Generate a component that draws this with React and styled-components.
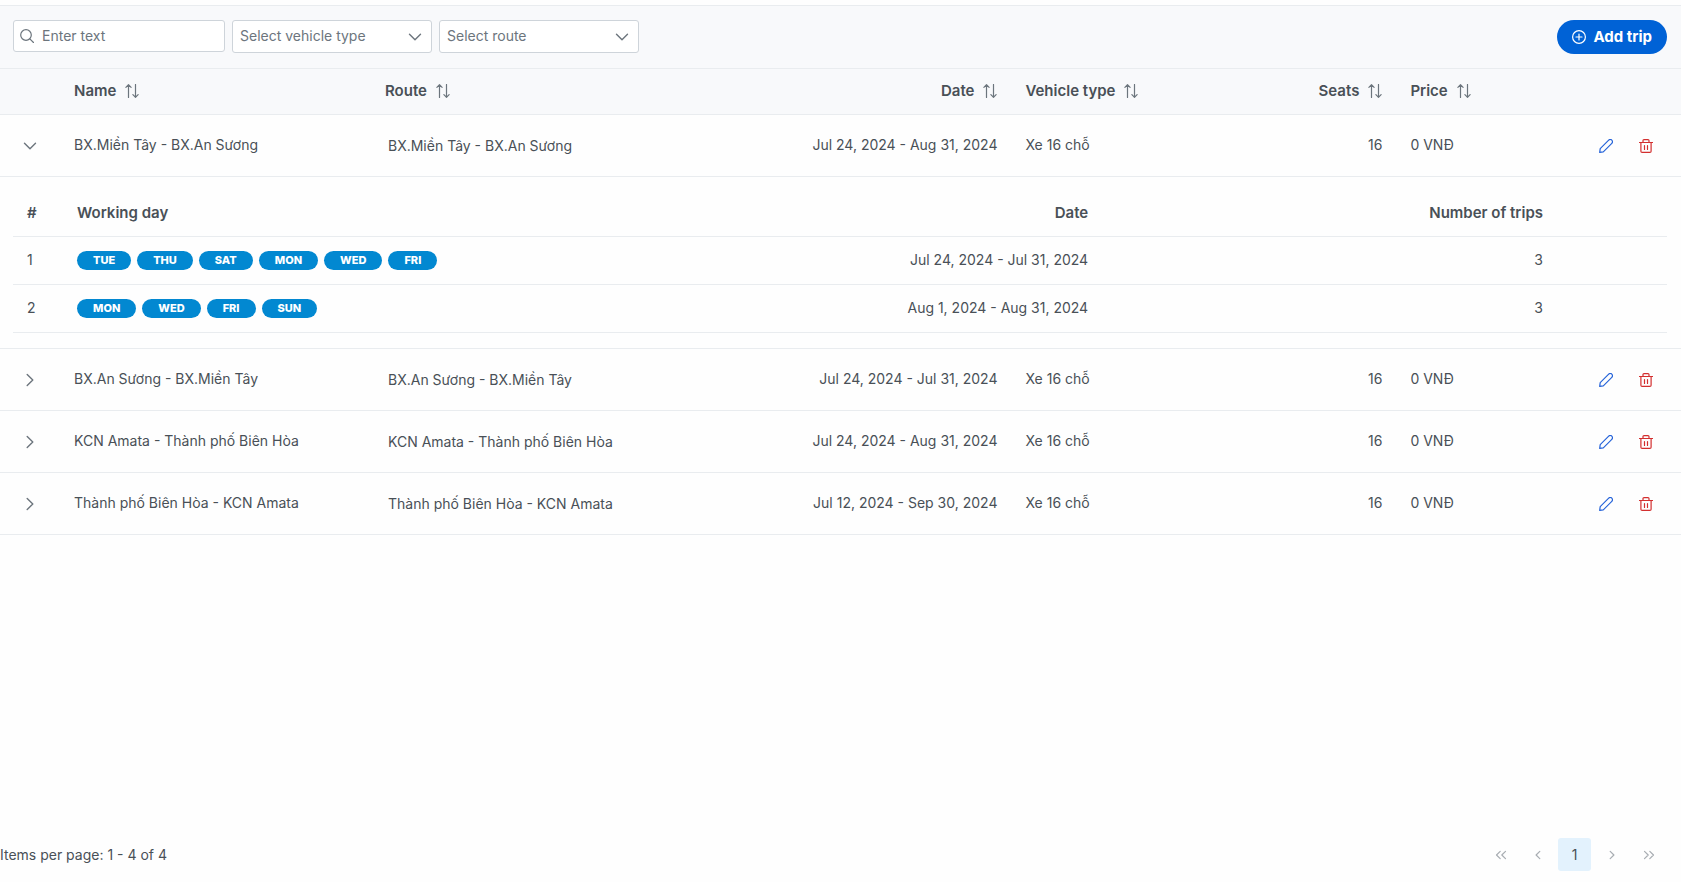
import React, { useState } from 'react';
import styled, { createGlobalStyle } from 'styled-components';

const GlobalStyle = createGlobalStyle`
  *, *::before, *::after {
    box-sizing: border-box;
  }

  body {
    margin: 0;
    background: #fefefe;
    color: #495057;
    font-family: Inter, "Noto Sans", sans-serif;
    font-size: 14px;
    line-height: 20px;
  }

  button, input, select {
    font: inherit;
  }
`;

// ----- STYLED COMPONENTS START -----
const Page = styled.main`
  display: flex;
  flex-direction: column;
  min-height: 100vh;
  padding-top: 5px;
`;

const Toolbar = styled.div`
  display: flex;
  align-items: flex-start;
  justify-content: space-between;
  padding: 14px 14px 14px 13px;
  border: solid #e9ecef;
  border-width: 1px 0;
  background: #f8f9fb;
`;

const Filters = styled.div`
  display: flex;
  align-items: flex-start;
  gap: 7px;
`;

const Field = styled.label`
  position: relative;
  display: block;
  width: ${({ $width }) => $width}px;
  color: #6c757d;
`;

const FieldIcon = styled.span`
  position: absolute;
  top: 0;
  bottom: 0;
  ${({ $side }) => $side}: ${({ $side }) => ($side === 'left' ? 7 : 10)}px;
  display: flex;
  align-items: center;
  pointer-events: none;
`;

const TextInput = styled.input`
  display: block;
  width: 100%;
  height: 32px;
  padding: 0 8px 2px 28px;
  border: 1px solid #ced4da;
  border-radius: 3px;
  background: #fff;
  color: #495057;

  &::placeholder {
    color: #6c757d;
    opacity: 1;
  }
`;

const Select = styled.select`
  display: block;
  width: 100%;
  height: 33px;
  padding: 0 28px 2px 7px;
  border: 1px solid #ced4da;
  border-radius: 3px;
  appearance: none;
  background: #fff;
  color: #6c757d;
`;

const AddButton = styled.button`
  display: flex;
  align-items: center;
  gap: 7px;
  height: 34px;
  padding: 0 15px;
  border: 0;
  border-radius: 17px;
  background: #0062d6;
  color: #fff;
  font-size: 15px;
  font-weight: 700;
  cursor: pointer;
`;

const Table = styled.table`
  width: 100%;
  border-collapse: separate;
  border-spacing: 0;
  table-layout: fixed;
`;

const Col = styled.col`
  width: ${({ $width }) => $width};
`;

const HeadCell = styled.th`
  height: 46px;
  padding: 0 14px 2px;
  border-bottom: 1px solid #e9ecef;
  background: ${({ $plain }) => ($plain ? 'transparent' : '#f8f9fb')};
  font-size: 15px;
  font-weight: 600;
  text-align: ${({ $align }) => $align || 'left'};
`;

const Cell = styled.td`
  height: ${({ $small }) => ($small ? 48 : 62)}px;
  padding: 0 14px 2px;
  border-bottom: 1px solid #e9ecef;
  text-align: ${({ $align }) => $align || 'left'};
`;

// cells whose content sits on the exact middle of the row
const MiddleCell = styled(Cell)`
  padding-bottom: 0;
`;

const SortButton = styled.button`
  display: inline-flex;
  align-items: center;
  gap: 9px;
  padding: 0;
  border: 0;
  background: none;
  color: inherit;
  font-weight: 600;
  cursor: pointer;

  svg {
    color: #6c757d;
  }
`;

const IconButton = styled.button`
  display: inline-flex;
  align-items: center;
  justify-content: center;
  width: 32px;
  height: 32px;
  padding: 0;
  border: 0;
  background: none;
  color: ${({ $color }) => $color || '#6c757d'};
  cursor: pointer;
`;

const RouteName = styled.span`
  padding: 0 3px;
`;

const Actions = styled.div`
  display: flex;
  justify-content: flex-end;
  gap: 8px;
  margin-right: 5px;
`;

const DetailCell = styled.td`
  padding: 14px 14px 15px 13px;
  border-bottom: 1px solid #e9ecef;
`;

const Badges = styled.div`
  display: flex;
  gap: 6px;
`;

const Badge = styled.span`
  padding: 0 16px;
  border-radius: 10px;
  background: #0288d1;
  color: #fff;
  font-size: 11px;
  font-weight: 800;
  line-height: 19px;
`;

const Footer = styled.footer`
  display: flex;
  align-items: center;
  justify-content: space-between;
  margin-top: auto;
  padding: 0 16px 11px 0;
`;

const Pager = styled.nav`
  display: flex;
  gap: 4px;
`;

const PageButton = styled.button`
  display: flex;
  align-items: center;
  justify-content: center;
  width: 33px;
  height: 33px;
  padding: 0;
  border: 0;
  border-radius: 3px;
  background: ${({ $active }) => ($active ? '#e3f2fd' : 'none')};
  color: ${({ $active }) => ($active ? '#495057' : '#a8adb2')};
`;
// ----- STYLED COMPONENTS END -----

const icons = {
  search: <><circle cx="6" cy="6" r="5.3" /><path d="M9.8 9.8 13.5 13.5" /></>,
  down: <path d="M1.5 4.2 7 9.8 12.5 4.2" strokeWidth="1.4" />,
  right: <path d="M4.2 1.5 9.8 7 4.2 12.5" strokeWidth="1.4" />,
  sort: <path d="M3.5 13.5V.8M.9 3.3 3.5.7l2.6 2.6M10.5.5v12.7M7.9 10.7l2.6 2.6 2.6-2.6" />,
  plus: <><circle cx="7" cy="7" r="6.4" /><path d="M7 4v6M4 7h6" /></>,
  pencil: <path d="M.7 13.3 1.2 9.7 9.7 1.2C10.7.2 12 .4 12.8 1.2s1 2.1 0 3.1L4.3 12.8Z" />,
  trash: <path d="M.5 3.5h13M1.9 3.5v8.7c0 .7.5 1.2 1.2 1.2h7.8c.7 0 1.2-.5 1.2-1.2V3.5M4 3.5V1.6c0-.6.4-1 1-1h4c.6 0 1 .4 1 1v1.9M5.5 6.5v4M8.5 6.5v4" />,
  first: <path d="M6.2 3.3 2.5 7l3.7 3.7M11.5 3.3 7.8 7l3.7 3.7" />,
  prev: <path d="M8.8 3.3 5.1 7l3.7 3.7" />,
  next: <path d="M5.2 3.3 8.9 7l-3.7 3.7" />,
  last: <path d="M2.5 3.3 6.2 7l-3.7 3.7M7.8 3.3 11.5 7l-3.7 3.7" />,
};

function Icon({ name, size = 14 }) {
  return (
    <svg
      width={size}
      height={size}
      viewBox="0 0 14 14"
      fill="none"
      stroke="currentColor"
      strokeWidth="1.2"
      strokeLinecap="round"
      strokeLinejoin="round"
      aria-hidden="true"
    >
      {icons[name]}
    </svg>
  );
}

const columns = [
  { label: 'Name' },
  { label: 'Route' },
  { label: 'Date', align: 'right' },
  { label: 'Vehicle type' },
  { label: 'Seats', align: 'right' },
  { label: 'Price' },
];

const trips = [
  {
    name: 'BX.Miền Tây - BX.An Sương',
    date: 'Jul 24, 2024 - Aug 31, 2024',
    schedule: [
      { days: ['TUE', 'THU', 'SAT', 'MON', 'WED', 'FRI'], date: 'Jul 24, 2024 - Jul 31, 2024', count: 3 },
      { days: ['MON', 'WED', 'FRI', 'SUN'], date: 'Aug 1, 2024 - Aug 31, 2024', count: 3 },
    ],
  },
  { name: 'BX.An Sương - BX.Miền Tây', date: 'Jul 24, 2024 - Jul 31, 2024', schedule: [] },
  { name: 'KCN Amata - Thành phố Biên Hòa', date: 'Jul 24, 2024 - Aug 31, 2024', schedule: [] },
  { name: 'Thành phố Biên Hòa - KCN Amata', date: 'Jul 12, 2024 - Sep 30, 2024', schedule: [] },
];

function Schedule({ items }) {
  return (
    <Table>
      <colgroup>
        <Col $width="50px" />
        <Col />
        <Col $width="20%" />
        <Col $width="27.5%" />
        <Col $width="110px" />
      </colgroup>
      <thead>
        <tr>
          <HeadCell $plain>#</HeadCell>
          <HeadCell $plain>Working day</HeadCell>
          <HeadCell $plain $align="right">Date</HeadCell>
          <HeadCell $plain $align="right">Number of trips</HeadCell>
          <HeadCell $plain />
        </tr>
      </thead>
      <tbody>
        {items.map((item, index) => (
          <tr key={item.date}>
            <Cell $small>{index + 1}</Cell>
            <MiddleCell $small>
              <Badges>
                {item.days.map((day) => <Badge key={day}>{day}</Badge>)}
              </Badges>
            </MiddleCell>
            <Cell $small $align="right">{item.date}</Cell>
            <Cell $small $align="right">{item.count}</Cell>
            <Cell $small />
          </tr>
        ))}
      </tbody>
    </Table>
  );
}

function TripRow({ trip, open, onToggle }) {
  return (
    <>
      <tr>
        <MiddleCell>
          <IconButton aria-label="Toggle details" aria-expanded={open} onClick={onToggle}>
            <Icon name={open ? 'down' : 'right'} />
          </IconButton>
        </MiddleCell>
        <Cell>{trip.name}</Cell>
        <MiddleCell><RouteName>{trip.name}</RouteName></MiddleCell>
        <Cell $align="right">{trip.date}</Cell>
        <Cell>Xe 16 chỗ</Cell>
        <Cell $align="right">16</Cell>
        <Cell>0 VNĐ</Cell>
        <MiddleCell>
          <Actions>
            <IconButton $color="#2563d9" aria-label="Edit"><Icon name="pencil" /></IconButton>
            <IconButton $color="#d32f2f" aria-label="Delete"><Icon name="trash" /></IconButton>
          </Actions>
        </MiddleCell>
      </tr>
      {open && (
        <tr>
          <DetailCell colSpan={8}><Schedule items={trip.schedule} /></DetailCell>
        </tr>
      )}
    </>
  );
}

export default function App() {
  const [expanded, setExpanded] = useState(0);

  return (
    <Page>
      <GlobalStyle />
      <Toolbar>
        <Filters>
          <Field $width={212}>
            <FieldIcon $side="left"><Icon name="search" /></FieldIcon>
            <TextInput type="text" placeholder="Enter text" aria-label="Enter text" />
          </Field>
          <Field $width={200}>
            <Select aria-label="Vehicle type"><option>Select vehicle type</option></Select>
            <FieldIcon $side="right"><Icon name="down" /></FieldIcon>
          </Field>
          <Field $width={200}>
            <Select aria-label="Route"><option>Select route</option></Select>
            <FieldIcon $side="right"><Icon name="down" /></FieldIcon>
          </Field>
        </Filters>
        <AddButton><Icon name="plus" />Add trip</AddButton>
      </Toolbar>

      <Table>
        <colgroup>
          <Col $width="60px" />
          <Col $width="18.5%" />
          <Col $width="24%" />
          <Col $width="14.1%" />
          <Col $width="14.9%" />
          <Col $width="8%" />
          <Col />
          <Col $width="140px" />
        </colgroup>
        <thead>
          <tr>
            <HeadCell />
            {columns.map(({ label, align }) => (
              <HeadCell key={label} $align={align}>
                <SortButton>{label}<Icon name="sort" /></SortButton>
              </HeadCell>
            ))}
            <HeadCell />
          </tr>
        </thead>
        <tbody>
          {trips.map((trip, index) => (
            <TripRow
              key={trip.name}
              trip={trip}
              open={expanded === index}
              onToggle={() => setExpanded(expanded === index ? -1 : index)}
            />
          ))}
        </tbody>
      </Table>

      <Footer>
        <span>Items per page: 1 - 4 of 4</span>
        <Pager aria-label="Pagination">
          <PageButton disabled aria-label="First page"><Icon name="first" /></PageButton>
          <PageButton disabled aria-label="Previous page"><Icon name="prev" /></PageButton>
          <PageButton $active>1</PageButton>
          <PageButton disabled aria-label="Next page"><Icon name="next" /></PageButton>
          <PageButton disabled aria-label="Last page"><Icon name="last" /></PageButton>
        </Pager>
      </Footer>
    </Page>
  );
}
